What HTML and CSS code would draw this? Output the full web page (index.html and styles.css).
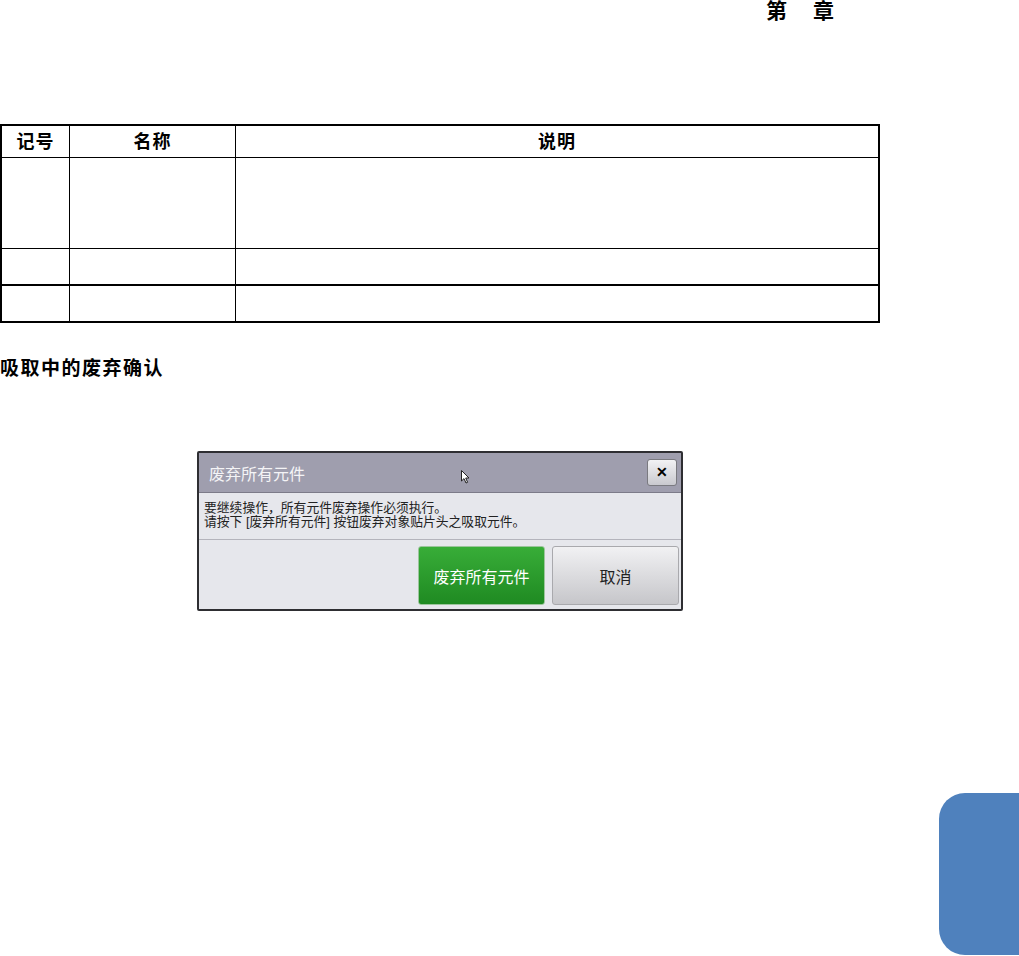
FILE: index.html
```html
<!DOCTYPE html>
<html lang="zh-CN">
<head>
  <meta charset="UTF-8">
  <meta name="viewport" content="width=device-width, initial-scale=1.0">
  <title>吸取中的废弃确认</title>
  <link rel="stylesheet" href="styles.css">
</head>
<body>
  <div class="page">
    <div class="chapter"><span>第</span><span>章</span></div>

    <table class="parts">
      <colgroup>
        <col class="col-no">
        <col class="col-name">
        <col>
      </colgroup>
      <thead>
        <tr><th>记号</th><th>名称</th><th>说明</th></tr>
      </thead>
      <tbody>
        <tr class="row-tall"><td></td><td></td><td></td></tr>
        <tr class="row-short"><td></td><td></td><td></td></tr>
        <tr class="row-short row-last"><td></td><td></td><td></td></tr>
      </tbody>
    </table>

    <h3 class="section">吸取中的废弃确认</h3>

    <div class="dialog">
      <div class="dialog-title">
        <span>废弃所有元件</span>
        <button class="close">✕</button>
        <svg class="cursor" width="9" height="14" viewBox="0 0 9 14">
          <path d="M0.5 0.5 L0.5 11 L3 8.6 L5 13 L6.6 12.3 L4.7 8 L8 8 Z" fill="#fff" stroke="#222" stroke-width="1"/>
        </svg>
      </div>
      <div class="dialog-msg">
        <p>要继续操作，所有元件废弃操作必须执行。</p>
        <p>请按下 [废弃所有元件] 按钮废弃对象贴片头之吸取元件。</p>
      </div>
      <div class="dialog-actions">
        <button class="btn btn-ok">废弃所有元件</button>
        <button class="btn btn-cancel">取消</button>
      </div>
    </div>

    <div class="tab"></div>
  </div>
</body>
</html>
```

FILE: styles.css
```css
body {
  margin: 0;
  background-color: #fff;
  font-family: "Liberation Sans", "Noto Sans CJK SC", sans-serif;
  color: #000;
}
.page {
  position: relative;
  width: 1019px;
  height: 956px;
  overflow: hidden;
}
.chapter {
  display: flex;
  justify-content: flex-end;
  gap: 26px;
  padding-right: 185px;
  font-size: 21px;
  font-weight: bold;
  line-height: 22px;
}

/* table */
.parts {
  margin-top: 102px;
  width: 880px;
  table-layout: fixed;
  border-collapse: separate;
  border-spacing: 0;
  border: 2px solid #000;
}
.col-no {
  width: 68px;
}
.col-name {
  width: 166px;
}
.parts th,
.parts td {
  padding: 0;
  border-right: 1px solid #000;
  border-bottom: 1px solid #000;
}
.parts th:last-child,
.parts td:last-child {
  border-right: none;
}
.parts th {
  height: 32px;
  padding-top: 1px;
  box-sizing: border-box;
  font-size: 18px;
  letter-spacing: 1px;
  line-height: 22px;
}
.row-tall td {
  height: 90px;
}
.row-short td {
  height: 36px;
}
.parts tr.row-short:nth-child(2) td {
  border-bottom-width: 2px;
  height: 35px;
}
.parts tr.row-last td {
  border-bottom: none;
  height: 35px;
}

.section {
  margin: 36px 0 0;
  font-size: 19px;
  letter-spacing: 1.5px;
  line-height: 20px;
}

/* dialog */
.dialog {
  margin: 72px 0 0 197px;
  width: 486px;
  box-sizing: border-box;
  border: 2px solid #2e2e32;
  border-radius: 2px;
  background-color: #e6e7ec;
}
.dialog-title {
  position: relative;
  display: flex;
  align-items: center;
  justify-content: space-between;
  height: 39px;
  padding: 0 4px 0 10px;
  background-color: #9f9eae;
  border-bottom: 1px solid #7c7b89;
  color: #f4f4f6;
  font-size: 16px;
}
.close {
  width: 30px;
  height: 27px;
  padding: 0;
  border: 1px solid #7a7a80;
  border-radius: 3px;
  background: linear-gradient(#f2f2f4, #c9c9cf);
  color: #000;
  font-size: 14px;
  font-weight: bold;
  line-height: 25px;
}
.cursor {
  position: absolute;
  left: 262px;
  top: 17px;
}
.dialog-msg {
  padding: 8px 5px 10px;
  border-bottom: 1px solid #b4b4bc;
  font-size: 12.8px;
  line-height: 14px;
  color: #222;
}
.dialog-msg p {
  margin: 0;
}
.dialog-actions {
  display: flex;
  justify-content: flex-end;
  gap: 7px;
  padding: 6px 2px 4px;
}
.btn {
  width: 127px;
  height: 59px;
  border-radius: 3px;
  font-family: "Liberation Sans", "Noto Sans CJK SC", sans-serif;
  font-size: 16px;
}
.btn-ok {
  border: 1px solid #9cc59c;
  background: linear-gradient(#38ad38, #1f8a22);
  color: #fff;
}
.btn-cancel {
  border: 1px solid #a9a9ad;
  background: linear-gradient(#f1f1f3, #c6c6ca);
  color: #222;
}

.tab {
  position: absolute;
  right: 0;
  top: 793px;
  width: 80px;
  height: 162px;
  border-radius: 26px 0 0 26px;
  background-color: #4f81bd;
}
```
